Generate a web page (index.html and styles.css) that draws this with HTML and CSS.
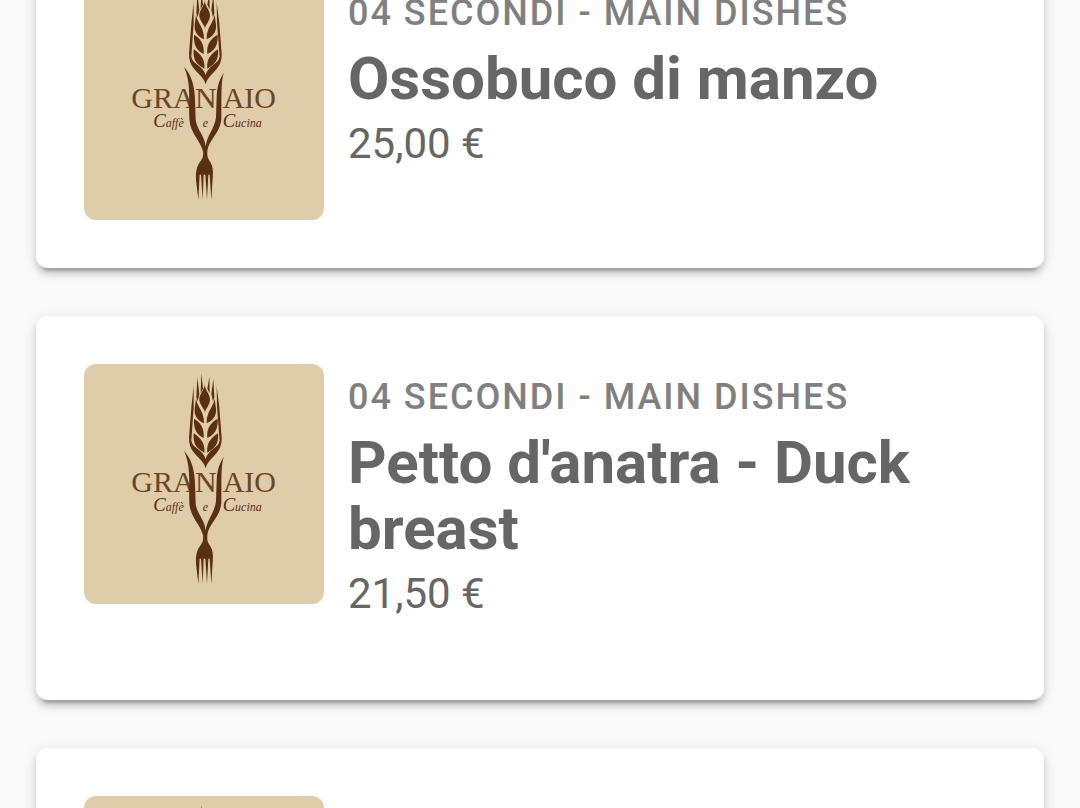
FILE: index.html
```html
<!DOCTYPE html>
<html lang="it">
<head>
    <meta charset="UTF-8">
    <meta name="viewport" content="width=device-width, initial-scale=1.0">
    <title>Granaio - Menu</title>
    <link rel="stylesheet" href="styles.css">
</head>
<body>

    <!-- Wheat and fork, shared by all the cards -->
    <svg class="sprite" aria-hidden="true">
        <symbol id="wheat" viewBox="0 0 720 720">
            <!-- awns -->
            <path d="M352 27L357 74L350 88ZM340 40L346 90L341 112L337 100ZM376 38L377 88L370 74ZM388 44L391 100L387 112L382 90Z"/>
            <!-- kernels -->
            <path d="M362 64C366 84 379 92 378 108C377 122 368 130 363 144C358 130 347 122 346 108C345 92 358 84 362 64Z"/>
            <path d="M336 104C340 130 361 142 360 178C342 170 330 156 332 134ZM392 104C388 130 367 142 368 178C386 170 398 156 396 134Z"/>
            <path d="M330 164C350 176 362 192 359 222C340 212 328 198 330 164ZM401 164C380 176 367 192 370 222C390 212 403 198 401 164Z"/>
            <path d="M329 208C350 222 364 238 361 266C338 254 326 240 329 208ZM402 208C380 222 367 238 370 266C392 254 405 240 402 208Z"/>
            <!-- outer husk -->
            <path d="M329 66L329 130L322 230C326 254 358 256 365 286C371 256 402 254 407 230L399 130L398 66L406 130L413 222C414 272 374 278 365 313C356 278 314 272 315 222L322 130Z"/>
            <!-- fork -->
            <path d="M300 260C322 284 332 316 333 360L335 420C340 452 362 466 365 500C368 468 392 446 396 412L398 350C399 318 407 298 419 278C410 312 413 350 412 416C409 460 374 478 370 514C367 546 387 540 387 578L382 660L377 584L373 584L369 660L364 584L359 584L356 660L351 584L347 584L343 660L336 600C334 536 362 550 357 514C350 482 318 460 316 416C314 360 322 310 300 260Z"/>
        </symbol>
    </svg>

    <main class="screen">
        <div class="list">
            <article class="card">
                <svg class="thumb" viewBox="0 0 720 720" role="img" aria-label="Granaio Caffè e Cucina">
                    <text class="logo-name" y="384"><tspan x="142">GRA</tspan><tspan x="333">N</tspan><tspan x="416">AIO</tspan></text>
                    <text class="logo-sub" y="440"><tspan class="logo-cap" x="208">C</tspan>affè <tspan x="356">e</tspan> <tspan class="logo-cap" x="416">C</tspan>ucina</text>
                    <use href="#wheat"/>
                </svg>
                <div class="info">
                    <p class="category">04 SECONDI - MAIN DISHES</p>
                    <h2 class="title">Ossobuco di manzo</h2>
                    <p class="price">25,00 €</p>
                </div>
            </article>

            <article class="card">
                <svg class="thumb" viewBox="0 0 720 720" role="img" aria-label="Granaio Caffè e Cucina">
                    <text class="logo-name" y="384"><tspan x="142">GRA</tspan><tspan x="333">N</tspan><tspan x="416">AIO</tspan></text>
                    <text class="logo-sub" y="440"><tspan class="logo-cap" x="208">C</tspan>affè <tspan x="356">e</tspan> <tspan class="logo-cap" x="416">C</tspan>ucina</text>
                    <use href="#wheat"/>
                </svg>
                <div class="info">
                    <p class="category">04 SECONDI - MAIN DISHES</p>
                    <h2 class="title">Petto d'anatra - Duck breast</h2>
                    <p class="price">21,50 €</p>
                </div>
            </article>

            <article class="card">
                <svg class="thumb" viewBox="0 0 720 720" role="img" aria-label="Granaio Caffè e Cucina">
                    <use href="#wheat"/>
                </svg>
            </article>
        </div>
    </main>

</body>
</html>
```
FILE: styles.css
```css
body {
    margin: 0;
    font-family: Roboto, sans-serif;
    background: #fafafa;
    color: #666;
}

.sprite {
    display: block;
    width: 0;
    height: 0;
}

.screen {
    height: 100vh;
    overflow: hidden;
}

/* the list is scrolled a little past the top of the first card */
.list {
    display: flex;
    flex-direction: column;
    gap: 48px;
    margin-top: -68px;
    padding: 0 36px;
}

.card {
    display: flex;
    align-items: flex-start;
    gap: 24px;
    padding: 48px;
    background: #fff;
    border-radius: 12px;
    box-shadow: 0 9px 3px -6px rgba(0, 0, 0, 0.2),
                0 6px 6px 0 rgba(0, 0, 0, 0.14),
                0 3px 15px 0 rgba(0, 0, 0, 0.12);
}

.thumb {
    flex-shrink: 0;
    width: 240px;
    height: 240px;
    border-radius: 12px;
    background: #dfcda9;
    fill: #5b2f14;
}

.info {
    flex: 1;
    padding: 12px 0 27px;
}

.category {
    margin: 0 0 12px;
    font-size: 36px;
    font-weight: 500;
    line-height: 42px;
    letter-spacing: 2px;
    color: #808080;
}

.title {
    margin: 0;
    font-size: 60px;
    font-weight: 700;
    line-height: 66px;
}

.price {
    margin: 0;
    font-size: 42px;
    line-height: 63px;
}

.logo-name {
    font-family: "Liberation Serif", serif;
    font-size: 90px;
    fill: #6b4526;
}

.logo-sub {
    font-family: "Liberation Serif", serif;
    font-size: 36px;
    font-style: italic;
}

.logo-cap {
    font-size: 56px;
}
```
